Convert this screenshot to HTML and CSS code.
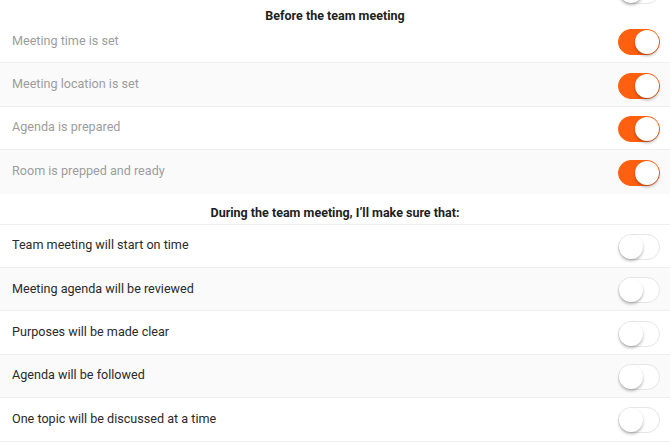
FILE: index.html
```html
<!DOCTYPE html>
<html>
<head>
<meta charset="utf-8">
<link rel="stylesheet" href="styles.css">
</head>
<body>
<div class="list">
  <div class="row row-top muted">
    <span class="label">Participants are determined</span>
    <span class="toggle"><span class="knob"></span></span>
  </div>
  <div class="header header-first">Before the team meeting</div>
  <div class="row muted">
    <span class="label">Meeting time is set</span>
    <span class="toggle on"><span class="knob"></span></span>
  </div>
  <div class="row alt muted">
    <span class="label">Meeting location is set</span>
    <span class="toggle on"><span class="knob"></span></span>
  </div>
  <div class="row muted">
    <span class="label">Agenda is prepared</span>
    <span class="toggle on"><span class="knob"></span></span>
  </div>
  <div class="row alt muted last">
    <span class="label">Room is prepped and ready</span>
    <span class="toggle on"><span class="knob"></span></span>
  </div>
  <div class="header header-second">During the team meeting, I’ll make sure that:</div>
  <div class="row">
    <span class="label">Team meeting will start on time</span>
    <span class="toggle"><span class="knob"></span></span>
  </div>
  <div class="row alt">
    <span class="label">Meeting agenda will be reviewed</span>
    <span class="toggle"><span class="knob"></span></span>
  </div>
  <div class="row">
    <span class="label">Purposes will be made clear</span>
    <span class="toggle"><span class="knob"></span></span>
  </div>
  <div class="row alt">
    <span class="label">Agenda will be followed</span>
    <span class="toggle"><span class="knob"></span></span>
  </div>
  <div class="row">
    <span class="label">One topic will be discussed at a time</span>
    <span class="toggle"><span class="knob"></span></span>
  </div>
</div>
</body>
</html>
```
FILE: styles.css
```css
html, body {
  margin: 0;
  padding: 0;
  background: #ffffff;
  overflow: hidden;
}
body {
  font-family: Roboto, "Noto Sans", sans-serif;
  font-size: 12.6px;
  color: #2a2a2a;
}
.list {
  display: flex;
  flex-direction: column;
}
.row {
  box-sizing: border-box;
  height: 43.4px;
  display: flex;
  align-items: center;
  justify-content: space-between;
  padding: 0 10px 0 12px;
  border-bottom: 1px solid #efefef;
  background: #ffffff;
}
.row.alt {
  background: #fafafa;
}
.row.last {
  border-bottom: none;
}
.row-top {
  height: 30px;
  margin-top: -25px;
  border-bottom: none;
}
.muted .label {
  color: #9d9d9d;
}
.label {
  line-height: 16px;
  padding-bottom: 1px;
}
.header {
  text-align: center;
  font-weight: 700;
  font-size: 12.5px;
  color: #1e1e1e;
  line-height: 16px;
}
.header-first {
  position: relative;
  z-index: 1;
  box-sizing: border-box;
  height: 15px;
  padding-top: 3px;
}
.header-second {
  box-sizing: border-box;
  height: 31px;
  padding-top: 11px;
  border-bottom: 1px solid #efefef;
}
.toggle {
  position: relative;
  box-sizing: border-box;
  width: 42px;
  height: 26px;
  border-radius: 13px;
  background: #ffffff;
  border: 1px solid #e6e6e6;
  flex: none;
  margin-top: 2px;
}
.toggle.on {
  background: #ff600f;
  border-color: #ff600f;
}
.knob {
  position: absolute;
  top: 0;
  left: 0;
  width: 24px;
  height: 24px;
  border-radius: 50%;
  background: #ffffff;
  box-shadow: 0 2px 3px rgba(0, 0, 0, 0.28);
}
.toggle.on .knob {
  left: 16px;
}
```
